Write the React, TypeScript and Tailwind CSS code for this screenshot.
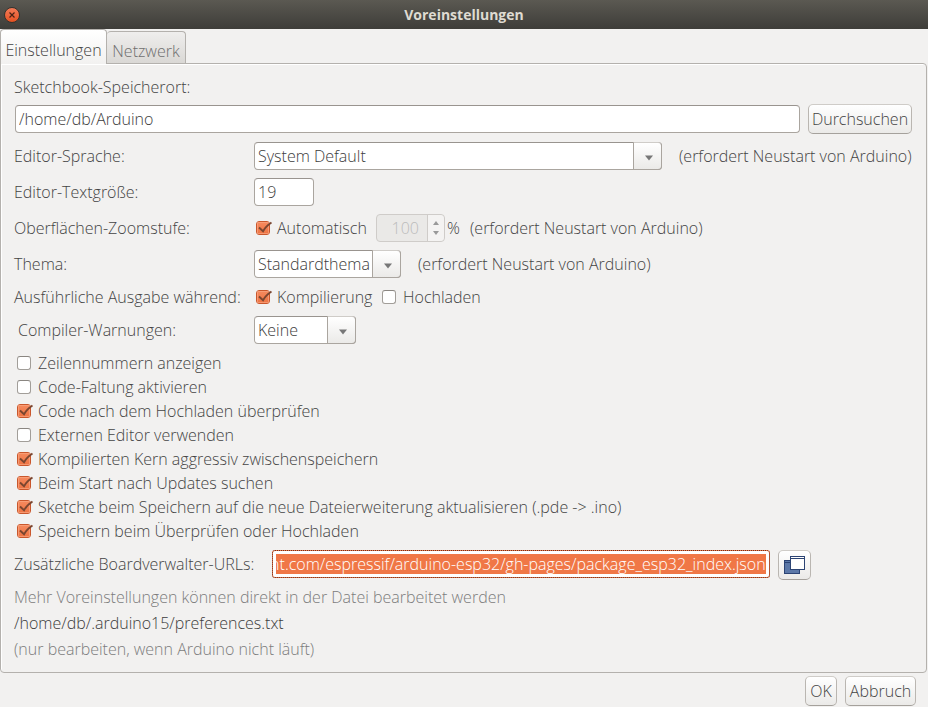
import { useEffect, useRef } from "react";
import type { ReactNode } from "react";

const outline = "rounded border border-[#aaa59f] border-t-[#99948f] bg-white text-[#3c3c3c]";
const raised =
  "rounded-[5px] border border-[#bab6b1] border-t-[#cfccc8] border-b-[#a5a19c] bg-linear-to-b from-white to-[#ebeae8]";

function Check({ label, checked = false }: { label: string; checked?: boolean }) {
  return (
    <label className="flex h-6 items-center gap-1.5">
      <span className="relative block size-[15px]">
        <input
          type="checkbox"
          defaultChecked={checked}
          className="peer block size-[14px] appearance-none rounded-[3px] border border-[#a29e99] border-t-[#8a8681] bg-white checked:border-[#c9572c] checked:bg-linear-to-b checked:from-[#f68a5e] checked:to-[#ee7443]"
        />
        <svg
          viewBox="0 0 16 14"
          className="pointer-events-none absolute top-0 left-0 hidden h-[14px] w-4 peer-checked:block"
          fill="none"
        >
          <path d="M1.5 1.5h11v11h-11Z" stroke="#f9a582" strokeOpacity=".7" />
          <path d="M3 6.5 7 10.3C8.5 7.3 11 4.5 15.5 1.5" stroke="#7a4630" strokeWidth="1.9" />
        </svg>
      </span>
      {label}
    </label>
  );
}

function Combo({ id, value, width }: { id: string; value: string; width: string }) {
  return (
    <div className={`relative h-7 ${width}`}>
      <select id={id} className={`h-7 w-full appearance-none pr-7 pl-[3px] ${outline}`}>
        <option>{value}</option>
      </select>
      <span className="pointer-events-none absolute inset-y-0 right-0 flex w-[29px] items-center justify-center rounded-r border border-[#aaa59f] border-t-[#cfccc8] bg-linear-to-b from-white to-[#ebeae8]">
        <svg viewBox="0 0 8 6" className="mt-1 ml-0.5 h-1.5 w-2">
          <path d="M0 .5h8L4 5.5Z" fill="#777" />
        </svg>
      </span>
    </div>
  );
}

function Row({
  label,
  htmlFor,
  height = "h-9",
  indent = "",
  children,
}: {
  label: string;
  htmlFor?: string;
  height?: string;
  indent?: string;
  children: ReactNode;
}) {
  return (
    <div className={`flex items-center ${height}`}>
      <label htmlFor={htmlFor} className={`w-60 shrink-0 ${indent}`}>
        {label}
      </label>
      {children}
    </div>
  );
}

const options: [string, boolean][] = [
  ["Zeilennummern anzeigen", false],
  ["Code-Faltung aktivieren", false],
  ["Code nach dem Hochladen überprüfen", true],
  ["Externen Editor verwenden", false],
  ["Kompilierten Kern aggressiv zwischenspeichern", true],
  ["Beim Start nach Updates suchen", true],
  ["Sketche beim Speichern auf die neue Dateierweiterung aktualisieren (.pde -> .ino)", true],
  ["Speichern beim Überprüfen oder Hochladen", true],
];

export default function App() {
  const urls = useRef<HTMLInputElement>(null);
  useEffect(() => {
    if (urls.current) urls.current.scrollLeft = urls.current.scrollWidth;
  }, []);

  return (
    <div className="min-h-screen bg-[#f2f1f0] font-['Open_Sans',sans-serif] text-base leading-5 font-light whitespace-nowrap text-[#444]">
      <header className="flex h-[29px] items-center bg-linear-to-b from-[#5b5952] to-[#3e3d39] px-1">
        <button
          aria-label="Schließen"
          className="flex size-4 items-center justify-center rounded-full border border-[#36332e] bg-linear-to-b from-[#f27b57] to-[#e5511f]"
        >
          <svg viewBox="0 0 8 8" className="size-2" stroke="#4a2114" strokeWidth="1.2">
            <path d="M1.5 1.5l5 5M6.5 1.5l-5 5" />
          </svg>
        </button>
        <h1 className="flex-1 pr-4 text-center text-sm font-bold text-[#dfdbd2]">Voreinstellungen</h1>
      </header>

      <div role="tablist" className="flex h-[34px] items-end">
        <button
          role="tab"
          aria-selected="true"
          className="z-10 -mb-px h-[35px] w-[107px] rounded-t border border-b-0 border-[#b4b1ad] bg-linear-to-b from-white to-[#f2f1f0] pt-1.5"
        >
          Einstellungen
        </button>
        <button
          role="tab"
          aria-selected="false"
          className="h-8 w-[79px] rounded-t border border-b-0 border-l-0 border-[#b4b1ad] bg-linear-to-b from-[#efeeed] to-[#dad8d5] pt-1.5 text-[#6e6e6e]"
        >
          Netzwerk
        </button>
      </div>

      <main className="mr-px rounded-b rounded-tr border border-[#b4b1ad] px-[13px] pt-[13px] pb-2.5 shadow-[inset_1px_1px_0_#fff]">
        <label htmlFor="sketchbook" className="block">
          Sketchbook-Speicherort:
        </label>
        <div className="mt-[7px] flex h-[30px] items-center gap-2 px-px">
          <input
            id="sketchbook"
            defaultValue="/home/db/Arduino"
            className={`h-7 min-w-0 flex-1 px-[3px] ${outline}`}
          />
          <button className={`h-[30px] w-[104px] ${raised}`}>Durchsuchen</button>
        </div>

        <div className="mt-1">
          <Row label="Editor-Sprache:" htmlFor="language">
            <Combo id="language" value="System Default" width="w-[408px]" />
            <span className="ml-[17px]">(erfordert Neustart von Arduino)</span>
          </Row>
          <Row label="Editor-Textgröße:" htmlFor="fontsize">
            <input id="fontsize" defaultValue="19" className={`h-7 w-[60px] px-[3px] ${outline}`} />
          </Row>
          <Row label="Oberflächen-Zoomstufe:" htmlFor="zoom">
            <div className="w-[122px] shrink-0 pl-0.5">
              <Check label="Automatisch" checked />
            </div>
            <div className="flex h-7 w-[69px] rounded border border-[#cfccc9] bg-[#eae9e7] text-[#bbb]">
              <input id="zoom" disabled defaultValue="100" className="w-[50px] pr-2 text-right" />
              <span className="flex flex-1 flex-col items-center justify-center gap-1.5 rounded-r border-l border-[#cfccc9] bg-[#f4f3f2]">
                <svg viewBox="0 0 6 4" className="h-1 w-1.5" fill="#999">
                  <path d="M0 4h6L3 0Z" />
                </svg>
                <svg viewBox="0 0 6 4" className="h-1 w-1.5" fill="#999">
                  <path d="M0 0h6L3 4Z" />
                </svg>
              </span>
            </div>
            <span className="ml-0.5 w-[23px]">%</span>
            <span>(erfordert Neustart von Arduino)</span>
          </Row>
          <Row label="Thema:" htmlFor="theme">
            <Combo id="theme" value="Standardthema" width="w-[147px]" />
            <span className="ml-[17px]">(erfordert Neustart von Arduino)</span>
          </Row>
          <Row label="Ausführliche Ausgabe während:" height="h-[30px]">
            <div className="w-[126px] pl-0.5">
              <Check label="Kompilierung" checked />
            </div>
            <div className="pl-0.5">
              <Check label="Hochladen" />
            </div>
          </Row>
          <Row label="Compiler-Warnungen:" htmlFor="warnings" indent="pl-1">
            <Combo id="warnings" value="Keine" width="w-[102px]" />
          </Row>
        </div>

        <div className="mt-[3px] pl-[3px]">
          {options.map(([label, checked]) => (
            <Check key={label} label={label} checked={checked} />
          ))}
        </div>

        <div className="mt-[7px] flex items-start">
          <label htmlFor="urls" className="w-[258px] leading-7">
            Zusätzliche Boardverwalter-URLs:
          </label>
          <div className="w-[498px] rounded-[3px] border border-dotted border-[#6b3220] bg-[#f07746]">
            <div className="rounded-xs bg-white p-[3px]">
              <input
                id="urls"
                ref={urls}
                defaultValue="https://raw.githubusercontent.com/espressif/arduino-esp32/gh-pages/package_esp32_index.json"
                className="block h-5 w-full bg-[#f07746] text-white"
              />
            </div>
          </div>
          <button aria-label="URLs bearbeiten" className={`ml-2 flex h-[30px] w-[33px] items-center justify-center ${raised}`}>
            <svg viewBox="0 0 21 18" className="h-[18px] w-[21px]" stroke="#2c4474" shapeRendering="crispEdges">
              <path d="M.5 4.5h15v13H.5Z" fill="#5c78a8" />
              <path d="M.5 6.5h5" />
              <path d="M6.5.5h14v13h-14Z" fill="#fff" />
              <path d="M6.5 2.5h14" />
            </svg>
          </button>
        </div>

        <p className="mt-1 leading-[26px] text-[#7c7c7c]">Mehr Voreinstellungen können direkt in der Datei bearbeitet werden</p>
        <p className="leading-[26px] text-[#3c3c3c]">/home/db/.arduino15/preferences.txt</p>
        <p className="leading-[26px] text-[#7c7c7c]">(nur bearbeiten, wenn Arduino nicht läuft)</p>
      </main>

      <footer className="mt-[3px] flex justify-end gap-2 pr-3">
        <button className={`h-[30px] w-8 ${raised}`}>OK</button>
        <button className={`h-[30px] w-[71px] ${raised}`}>Abbruch</button>
      </footer>
    </div>
  );
}
